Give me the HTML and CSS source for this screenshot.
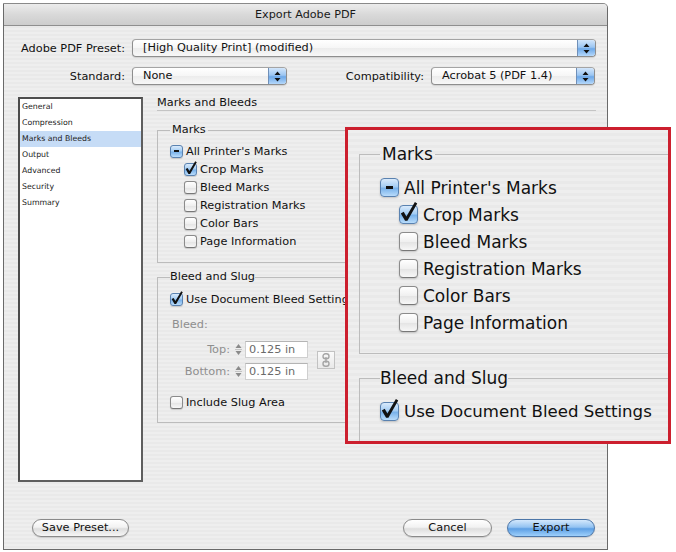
FILE: index.html
```html
<!DOCTYPE html>
<html>
<head>
<meta charset="utf-8">
<title>Export Adobe PDF</title>
<link rel="stylesheet" href="styles.css">
</head>
<body>
<div class="dialog">
  <div class="titlebar">Export Adobe PDF</div>
  <div class="dbody">
    <div class="row row-preset">
      <span class="lbl">Adobe PDF Preset:</span>
      <div class="popup popup-preset"><span class="ptext">[High Quality Print] (modified)</span><span class="parrows"><svg width="7" height="11" viewBox="0 0 7 11"><path d="M3.5 0.5 L6.5 4 L0.5 4 Z M0.5 7 L6.5 7 L3.5 10.5 Z" fill="#111"/></svg></span></div>
    </div>
    <div class="row row-std">
      <span class="lbl">Standard:</span>
      <div class="popup popup-std"><span class="ptext">None</span><span class="parrows"><svg width="7" height="11" viewBox="0 0 7 11"><path d="M3.5 0.5 L6.5 4 L0.5 4 Z M0.5 7 L6.5 7 L3.5 10.5 Z" fill="#111"/></svg></span></div>
      <span class="lbl lbl-compat">Compatibility:</span>
      <div class="popup popup-compat"><span class="ptext">Acrobat 5 (PDF 1.4)</span><span class="parrows"><svg width="7" height="11" viewBox="0 0 7 11"><path d="M3.5 0.5 L6.5 4 L0.5 4 Z M0.5 7 L6.5 7 L3.5 10.5 Z" fill="#111"/></svg></span></div>
    </div>
    <div class="main">
      <ul class="nav">
        <li>General</li>
        <li>Compression</li>
        <li class="sel">Marks and Bleeds</li>
        <li>Output</li>
        <li>Advanced</li>
        <li>Security</li>
        <li>Summary</li>
      </ul>
      <div class="panel">
        <div class="panel-title">Marks and Bleeds</div>
        <fieldset class="group marks">
          <legend>Marks</legend>
          <div class="cb-row"><span class="cb on"><svg class="dash" width="5" height="2" viewBox="0 0 5 2"><rect width="5" height="2" fill="#111"/></svg></span>All Printer's Marks</div>
          <div class="cb-row sub"><span class="cb on"><svg class="tick" width="15" height="16" viewBox="0 0 15 16"><path d="M2.6 9 L4.6 7.9 L6.4 11 L12.2 1.2 L13.8 2.2 L7.1 14 L5.5 14 Z" fill="#111"/></svg></span>Crop Marks</div>
          <div class="cb-row sub"><span class="cb"></span>Bleed Marks</div>
          <div class="cb-row sub"><span class="cb"></span>Registration Marks</div>
          <div class="cb-row sub"><span class="cb"></span>Color Bars</div>
          <div class="cb-row sub"><span class="cb"></span>Page Information</div>
        </fieldset>
        <fieldset class="group bleed">
          <legend>Bleed and Slug</legend>
          <div class="cb-row"><span class="cb on"><svg class="tick" width="15" height="16" viewBox="0 0 15 16"><path d="M2.6 9 L4.6 7.9 L6.4 11 L12.2 1.2 L13.8 2.2 L7.1 14 L5.5 14 Z" fill="#111"/></svg></span>Use Document Bleed Settings</div>
          <div class="dim-row">Bleed:</div>
          <div class="bleed-fields">
            <div class="field-rows">
              <div class="field-row">
                <span class="flbl">Top:</span>
                <span class="spin"><svg width="9" height="15" viewBox="0 0 9 15"><path d="M4.5 2 L7.5 6 L1.5 6 Z M1.5 9 L7.5 9 L4.5 13 Z" fill="#8a8a8a"/><line x1="1" y1="7.5" x2="8" y2="7.5" stroke="#c4c4c4"/></svg></span>
                <span class="field">0.125 in</span>
              </div>
              <div class="field-row">
                <span class="flbl">Bottom:</span>
                <span class="spin"><svg width="9" height="15" viewBox="0 0 9 15"><path d="M4.5 2 L7.5 6 L1.5 6 Z M1.5 9 L7.5 9 L4.5 13 Z" fill="#8a8a8a"/><line x1="1" y1="7.5" x2="8" y2="7.5" stroke="#c4c4c4"/></svg></span>
                <span class="field">0.125 in</span>
              </div>
            </div>
            <span class="link"><svg width="10" height="14" viewBox="0 0 10 14"><rect x="2" y="0.8" width="6" height="5" rx="2.5" fill="none" stroke="#a6a6a6" stroke-width="1.4"/><rect x="2" y="8.2" width="6" height="5" rx="2.5" fill="none" stroke="#a6a6a6" stroke-width="1.4"/><line x1="5" y1="4" x2="5" y2="10" stroke="#a6a6a6" stroke-width="1.4"/></svg></span>
          </div>
          <div class="cb-row slug"><span class="cb"></span>Include Slug Area</div>
        </fieldset>
      </div>
    </div>
    <div class="footer">
      <span class="btn btn-save">Save Preset...</span>
      <span class="spacer"></span>
      <span class="btn btn-cancel">Cancel</span>
      <span class="btn btn-export">Export</span>
    </div>
  </div>
</div>

<div class="callout">
  <fieldset class="zgroup zmarks">
    <legend>Marks</legend>
    <div class="zrow"><span class="zcb on"><svg class="zdash" width="7" height="3" viewBox="0 0 7 3"><rect width="7" height="3" fill="#111"/></svg></span>All Printer's Marks</div>
    <div class="zrow sub"><span class="zcb on"><svg class="ztick" width="22" height="24" viewBox="0 0 15 16"><path d="M2.6 9 L4.6 7.9 L6.4 11 L12.2 1.2 L13.8 2.2 L7.1 14 L5.5 14 Z" fill="#111"/></svg></span>Crop Marks</div>
    <div class="zrow sub"><span class="zcb"></span>Bleed Marks</div>
    <div class="zrow sub"><span class="zcb"></span>Registration Marks</div>
    <div class="zrow sub"><span class="zcb"></span>Color Bars</div>
    <div class="zrow sub"><span class="zcb"></span>Page Information</div>
  </fieldset>
  <fieldset class="zgroup zbleed">
    <legend>Bleed and Slug</legend>
    <div class="zrow"><span class="zcb on"><svg class="ztick" width="22" height="24" viewBox="0 0 15 16"><path d="M2.6 9 L4.6 7.9 L6.4 11 L12.2 1.2 L13.8 2.2 L7.1 14 L5.5 14 Z" fill="#111"/></svg></span><span class="zlong">Use Document Bleed Settings</span></div>
  </fieldset>
</div>
</body>
</html>
```

FILE: styles.css
```css
* { box-sizing: border-box; }

html, body {
  margin: 0;
  padding: 0;
  background: #ffffff;
}

body {
  font-family: "DejaVu Sans", "Liberation Sans", sans-serif;
  font-size: 11.3px;
  color: #111;
  width: 676px;
  height: 552px;
  position: relative;
  overflow: hidden;
}

.dialog {
  margin: 3px 0 0 3px;
  width: 605px;
  height: 547px;
  border: 1px solid #6a6a6a;
  border-top-color: #8a8a8a;
  border-radius: 0 5px 0 0;
  background: repeating-linear-gradient(to bottom, #eeeeee 0, #eeeeee 2px, #e9e9e9 2px, #e9e9e9 4px);
  display: flex;
  flex-direction: column;
}

.titlebar {
  height: 22px;
  line-height: 21px;
  text-align: center;
  font-size: 11.2px;
  color: #1a1a1a;
  background: linear-gradient(to bottom, #ececec, #d9d9d9 50%, #cdcdcd);
  border-bottom: 1px solid #8f8f8f;
  border-radius: 0 4px 0 0;
}

.dbody {
  flex: 1;
  display: flex;
  flex-direction: column;
}

.row {
  display: flex;
  align-items: center;
  height: 18px;
}

.row-preset { margin-top: 13px; }
.row-std { margin-top: 10px; }

.lbl {
  width: 121px;
  text-align: right;
  margin-right: 7px;
  white-space: nowrap;
}

.lbl-compat {
  width: 137px;
}

.popup {
  height: 18px;
  display: flex;
  align-items: stretch;
  border: 1px solid #8e8e8e;
  border-top-color: #a4a4a4;
  border-radius: 4px;
  background: linear-gradient(to bottom, #ffffff, #f6f6f6 50%, #ececec 51%, #f8f8f8);
  box-shadow: 0 1px 1px rgba(0,0,0,0.12);
  overflow: hidden;
}

.popup-preset { width: 464px; }
.popup-std { width: 155px; }
.popup-compat { width: 164px; }

.ptext {
  flex: 1;
  padding-left: 10px;
  line-height: 16px;
  white-space: nowrap;
}

.parrows {
  width: 18px;
  display: flex;
  align-items: center;
  justify-content: center;
  border-left: 1px solid #6f8fb8;
  background: linear-gradient(to bottom, #d2e6fb, #9cc6f2 45%, #6da8e8 55%, #b5d8fb);
}

.main {
  display: flex;
  margin-top: 10px;
  height: 387px;
}

.nav {
  list-style: none;
  margin: 2px 0 0 14px;
  padding: 0;
  width: 125px;
  height: 385px;
  background: #ffffff;
  border: 2px solid #4c4c4c;
  border-right-color: #5e5e5e;
  border-bottom-color: #5e5e5e;
}

.nav li {
  height: 16px;
  line-height: 15px;
  padding-left: 2px;
  font-size: 7.8px;
  color: #222;
}

.nav li.sel {
  background: #c6dcf6;
}

.panel {
  margin-left: 14px;
  width: 439px;
  display: flex;
  flex-direction: column;
}

.panel-title {
  height: 16px;
  line-height: 15px;
  border-bottom: 1px solid #c4c4c4;
}

.group {
  margin: 0;
  min-width: 0;
  border: 1px solid #bcbcbc;
  padding: 5px 0 12px 12px;
}

.group legend {
  padding: 0 2px;
  line-height: 14px;
  height: 14px;
}

.marks {
  margin-top: 12px;
}

.bleed {
  margin-top: 7px;
  padding-top: 6px;
  padding-bottom: 11px;
}

.bleed legend {
  padding: 0;
}

.cb-row {
  height: 18px;
  display: flex;
  align-items: center;
  white-space: nowrap;
}

.cb-row.sub {
  margin-left: 14px;
}

.cb {
  position: relative;
  flex: none;
  width: 13px;
  height: 13px;
  margin-right: 3px;
  border: 1px solid #8b8b8b;
  border-bottom-color: #777;
  border-radius: 3px;
  background: linear-gradient(to bottom, #ffffff, #f0f0f0 50%, #e3e3e3 51%, #f7f7f7);
  box-shadow: 0 1px 1px rgba(0,0,0,0.15);
}

.cb.on {
  border-color: #5a82b0;
  background: linear-gradient(to bottom, #d9eafb, #a5cdf3 45%, #79b2ea 55%, #b9dcfb);
}

.cb .dash {
  position: absolute;
  left: 3px;
  top: 4.5px;
}

.cb .tick {
  position: absolute;
  left: -2px;
  top: -4px;
}

.dim-row {
  height: 18px;
  line-height: 18px;
  margin-top: 8px;
  padding-left: 2px;
  color: #8e8e8e;
}

.bleed-fields {
  display: flex;
  align-items: center;
  margin-top: 5px;
}

.field-rows {
  display: flex;
  flex-direction: column;
  gap: 2px;
}

.field-row {
  height: 20px;
  display: flex;
  align-items: center;
}

.flbl {
  width: 60px;
  text-align: right;
  color: #8e8e8e;
}

.spin {
  width: 12px;
  height: 17px;
  margin-left: 2px;
  display: flex;
  align-items: center;
  justify-content: center;
}

.field {
  width: 63px;
  height: 17px;
  margin-left: 1px;
  line-height: 15px;
  padding-left: 3px;
  color: #6a6a6a;
  background: #ffffff;
  border: 1px solid #cfcfcf;
  border-top-color: #b4b4b4;
}

.link {
  width: 18px;
  height: 18px;
  margin-left: 9px;
  display: flex;
  align-items: center;
  justify-content: center;
  border: 1px solid #c2c2c2;
  background: linear-gradient(to bottom, #fafafa, #e9e9e9);
}

.cb-row.slug {
  margin-top: 12px;
}

.footer {
  display: flex;
  align-items: center;
  margin-top: 37px;
  padding: 0 12px 0 28px;
}

.spacer { flex: 1; }

.btn {
  height: 18px;
  line-height: 16px;
  text-align: center;
  border: 1px solid #8a8a8a;
  border-radius: 9px;
  background: linear-gradient(to bottom, #ffffff, #f2f2f2 45%, #dedede 55%, #f6f6f6);
  box-shadow: 0 1px 1px rgba(0,0,0,0.15);
  font-size: 11.3px;
}

.btn-save { width: 97px; }
.btn-cancel { width: 89px; margin-right: 15px; }
.btn-export {
  width: 88px;
  border-color: #4c76a8;
  background: linear-gradient(to bottom, #d4e8fc, #93c3f2 45%, #5d9fe4 55%, #9ed0fb);
}

/* enlarged callout */
.callout {
  position: absolute;
  left: 345px;
  top: 127px;
  width: 326px;
  height: 317px;
  border: 3px solid #cc1f2e;
  background: repeating-linear-gradient(to bottom, #eeeeee 0, #eeeeee 3px, #e9e9e9 3px, #e9e9e9 6px);
  overflow: hidden;
  font-size: 17px;
  padding-left: 11px;
}

.zgroup {
  margin: 0;
  width: 360px;
  min-width: 0;
  border: 1px solid #bcbcbc;
  border-right: none;
  padding: 9px 0 17px 20px;
}

.zgroup legend {
  padding: 0 2px;
  height: 22px;
  line-height: 22px;
}

.zmarks {
  margin-top: 13px;
}

.zbleed {
  margin-top: 13px;
  padding-bottom: 40px;
}

.zbleed legend {
  padding: 0;
}

.zrow {
  height: 27px;
  display: flex;
  align-items: center;
  white-space: nowrap;
}

.zrow.sub {
  margin-left: 19px;
}

.zlong {
  font-size: 16.6px;
}

.zcb {
  position: relative;
  flex: none;
  width: 19px;
  height: 19px;
  margin-right: 5px;
  border: 1px solid #8b8b8b;
  border-bottom-color: #777;
  border-radius: 4px;
  background: linear-gradient(to bottom, #ffffff, #f0f0f0 50%, #e3e3e3 51%, #f7f7f7);
  box-shadow: 0 1px 2px rgba(0,0,0,0.18);
}

.zcb.on {
  border-color: #5a82b0;
  background: linear-gradient(to bottom, #d9eafb, #a5cdf3 45%, #79b2ea 55%, #b9dcfb);
}

.zcb .zdash {
  position: absolute;
  left: 5px;
  top: 7px;
}

.zcb .ztick {
  position: absolute;
  left: -3px;
  top: -6px;
}
```
